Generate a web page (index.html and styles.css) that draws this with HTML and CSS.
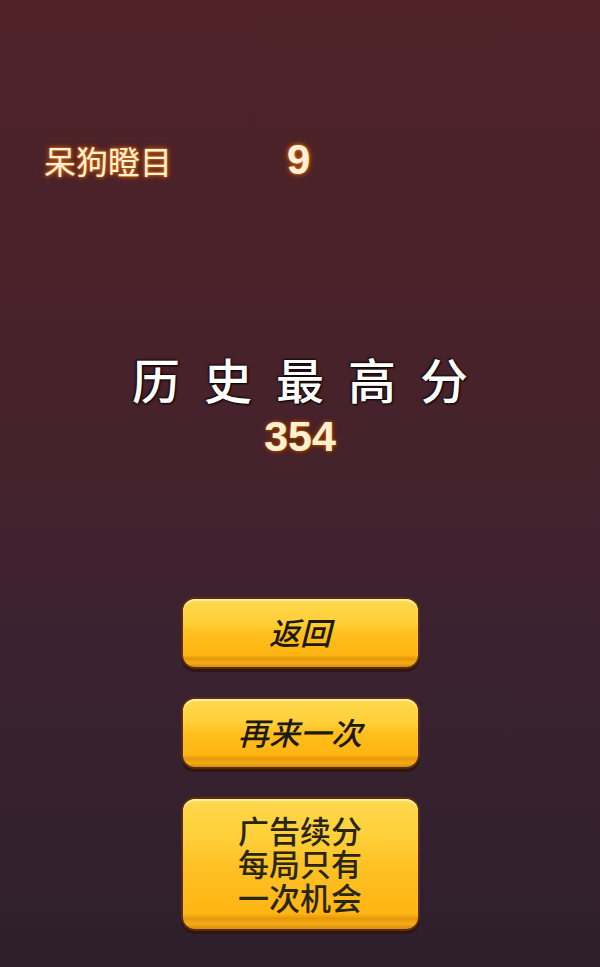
FILE: index.html
```html
<!DOCTYPE html>
<html lang="zh">
<head>
<meta charset="utf-8">
<title>游戏结束</title>
<link rel="stylesheet" href="styles.css">
</head>
<body>
<div class="screen">
  <div class="stat-row">
    <span class="stat-label">呆狗瞪目</span>
    <span class="stat-value">9</span>
  </div>
  <div class="best">
    <div class="best-title">历史最高分</div>
    <div class="best-score">354</div>
  </div>
  <div class="buttons">
    <button class="btn btn-italic">返回</button>
    <button class="btn btn-italic">再来一次</button>
    <button class="btn btn-tall"><span class="line">广告续分</span><span class="line">每局只有</span><span class="line">一次机会</span></button>
  </div>
</div>
</body>
</html>
```
FILE: styles.css
```css
html, body {
  margin: 0;
  padding: 0;
}
body {
  width: 600px;
  height: 967px;
  overflow: hidden;
  background: linear-gradient(180deg, #4f2328 0%, #47222b 40%, #3a2230 70%, #2e1f2c 100%);
  font-family: "Noto Sans CJK SC", "Noto Sans", sans-serif;
}
.screen {
  display: flex;
  flex-direction: column;
  height: 967px;
}
.stat-row {
  display: flex;
  align-items: center;
  margin-top: 142px;
  padding-left: 44px;
  height: 36px;
}
.stat-label {
  font-size: 32px;
  line-height: 36px;
  width: 128px;
  color: #fff1d6;
  text-shadow: 0 0 2px #e07a18, 0 0 4px #c85c10, 0 0 6px #a8460c;
}
.stat-value {
  margin-left: 115px;
  font-family: "Liberation Sans", Arial, sans-serif;
  font-weight: bold;
  font-size: 42px;
  line-height: 36px;
  color: #fff1d6;
  text-shadow: 0 0 2px #e07a18, 0 0 4px #c85c10, 0 0 6px #a8460c;
}
.best {
  display: flex;
  flex-direction: column;
  align-items: center;
  margin-top: 172px;
}
.best-title {
  font-size: 48px;
  line-height: 56px;
  letter-spacing: 24px;
  padding-left: 24px;
  color: #ffffff;
  font-weight: 500;
  text-shadow: 0 0 2px #150808, 1px 1px 2px #000, -1px -1px 2px #1a0a0a;
}
.best-score {
  margin-top: 6px;
  font-family: "Liberation Sans", Arial, sans-serif;
  font-weight: bold;
  font-size: 43px;
  line-height: 48px;
  color: #fff0d2;
  text-shadow: 0 0 1px #c8600e, 0 0 3px #b4500c, 0 0 6px #8a3a08, 1px 2px 3px #5a2408;
}
.buttons {
  display: flex;
  flex-direction: column;
  align-items: center;
  gap: 32px;
  margin-top: 139px;
}
.btn {
  width: 235px;
  height: 68px;
  border: none;
  padding: 0;
  border-radius: 12px;
  background: linear-gradient(180deg, #ffd94e 0%, #ffcf38 35%, #ffbf1e 50%, #ffb512 82%, #e6980c 88%, #f4ac16 94%, #d98d0e 100%);
  box-shadow: 0 0 0 2px #5a2c12, 0 3px 0 2px #32160e, inset 0 2px 1px rgba(255, 250, 200, 0.7);
  font-family: "Noto Sans CJK SC", "Noto Sans", sans-serif;
  font-size: 31px;
  line-height: 34px;
  color: #1c1a12;
  cursor: pointer;
}
.btn-italic {
  font-style: italic;
  font-weight: 500;
  padding-bottom: 2px;
}
.btn-tall {
  display: flex;
  flex-direction: column;
  align-items: center;
  justify-content: center;
  height: 130px;
  font-weight: 500;
  color: #2a2616;
  padding-bottom: 2px;
  background: linear-gradient(180deg, #ffd94e 0%, #ffcf38 30%, #ffc226 50%, #ffb512 88%, #e6980c 92%, #f4ac16 96%, #d98d0e 100%);
}
.line {
  display: block;
  height: 33.5px;
  line-height: 33.5px;
}
```
